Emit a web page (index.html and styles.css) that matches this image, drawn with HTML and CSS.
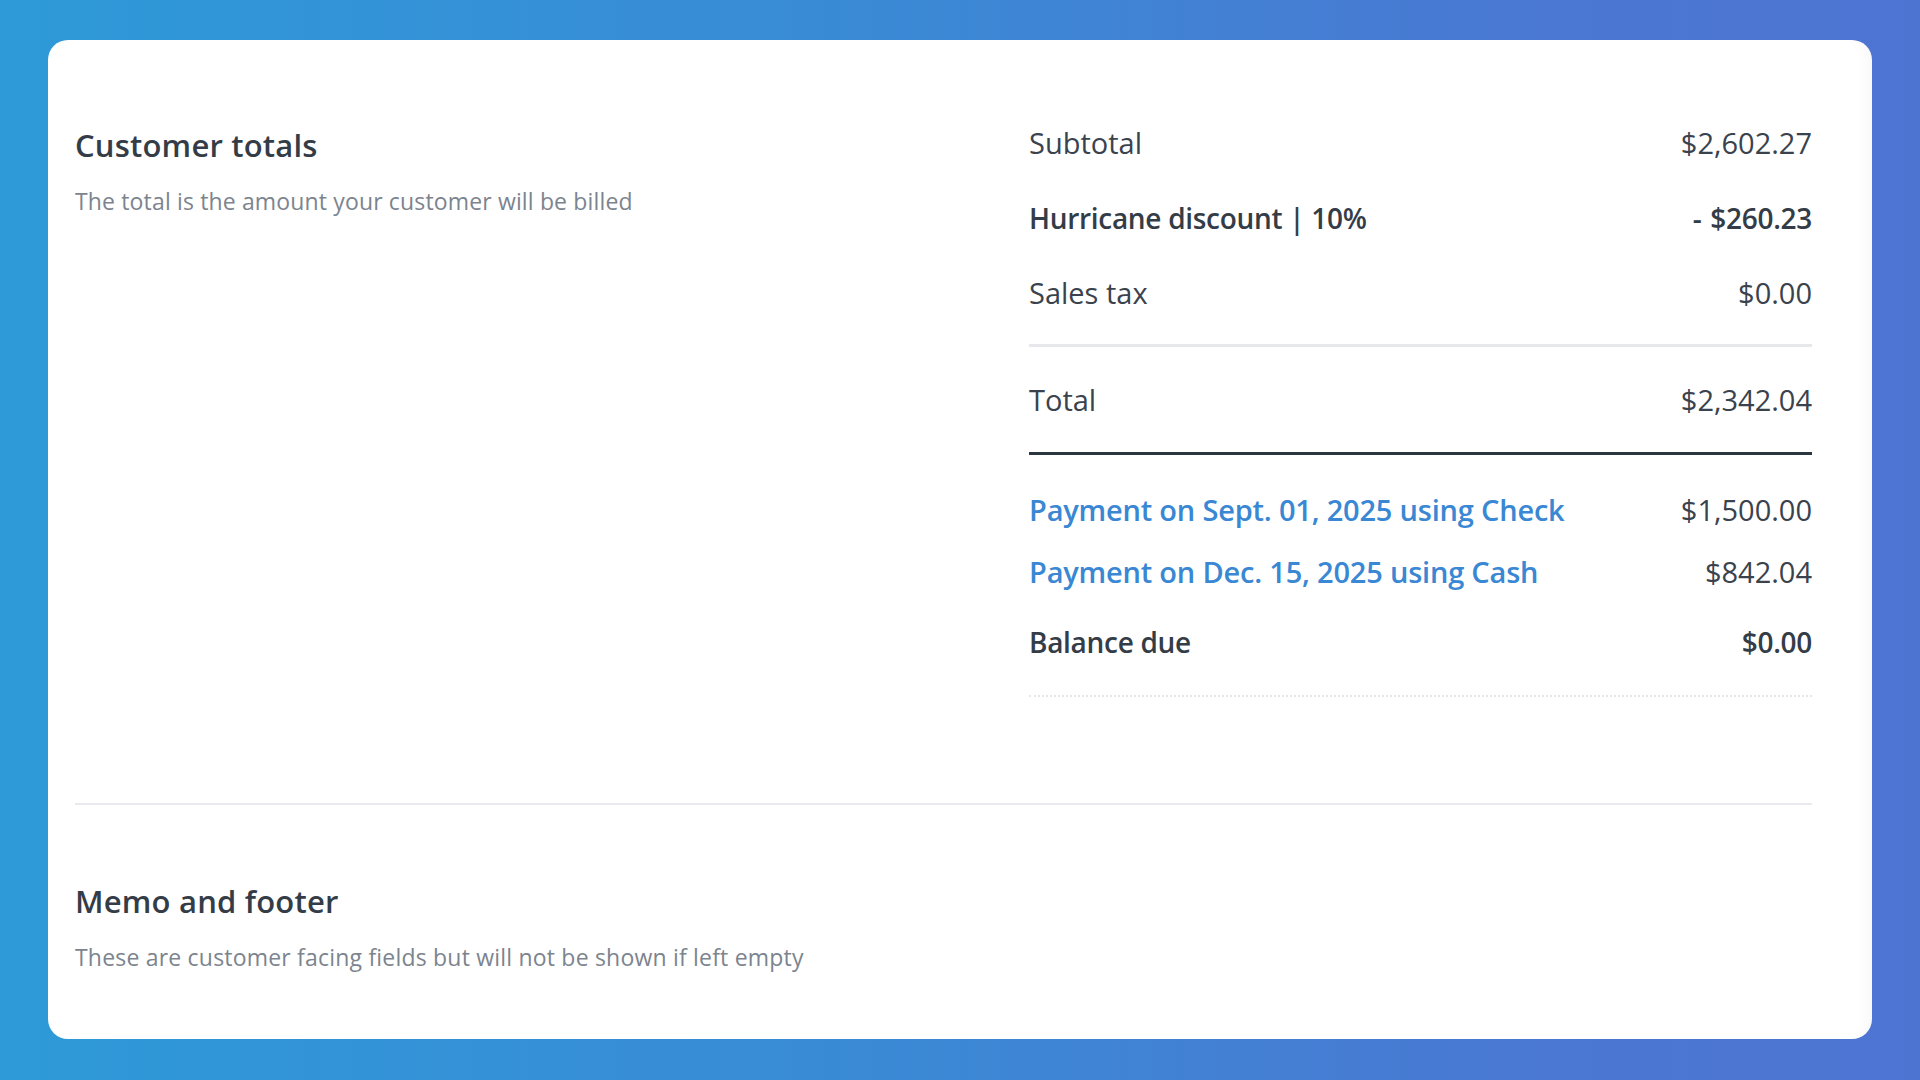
FILE: index.html
```html
<!DOCTYPE html>
<html lang="en">
<head>
<meta charset="utf-8">
<title>Customer totals</title>
<link rel="stylesheet" href="styles.css">
</head>
<body>
<div class="card">
  <section class="totals">
    <div class="intro">
      <h2 class="heading">Customer totals</h2>
      <p class="sub">The total is the amount your customer will be billed</p>
    </div>
    <div class="summary">
      <div class="row row-std"><span>Subtotal</span><span>$2,602.27</span></div>
      <div class="row row-std strong"><span>Hurricane discount | 10%</span><span>- $260.23</span></div>
      <div class="row row-std"><span>Sales tax</span><span>$0.00</span></div>
      <div class="rule-light"></div>
      <div class="row row-total"><span>Total</span><span>$2,342.04</span></div>
      <div class="rule-dark"></div>
      <div class="payments">
        <div class="row row-pay1"><a class="link">Payment on Sept. 01, 2025 using Check</a><span>$1,500.00</span></div>
        <div class="row row-pay2"><a class="link">Payment on Dec. 15, 2025 using Cash</a><span>$842.04</span></div>
        <div class="row row-balance strong"><span>Balance due</span><span>$0.00</span></div>
      </div>
      <div class="rule-dotted"></div>
    </div>
  </section>
  <div class="divider"></div>
  <section class="memo">
    <h2 class="heading">Memo and footer</h2>
    <p class="sub">These are customer facing fields but will not be shown if left empty</p>
  </section>
</div>
</body>
</html>
```
FILE: styles.css
```css
* { box-sizing: border-box; }
html, body { margin: 0; padding: 0; }
body {
  width: 1920px;
  height: 1080px;
  overflow: hidden;
  background: linear-gradient(90deg, #2e9ad8 0%, #3a8ad6 45%, #4a78d2 80%, #4e74d2 100%);
  padding: 40px 48px 41px 48px;
  font-family: "Open Sans", Lato, "Liberation Sans", sans-serif;
  color: #39424c;
}
.card {
  height: 999px;
  background: #fff;
  border-radius: 20px;
  padding: 65px 60px 0 27px;
  box-shadow: inset -16px 0 14px -12px rgba(0, 0, 0, 0.035);
}
.totals {
  display: grid;
  grid-template-columns: 1fr 783px;
}
.heading {
  margin: 0;
  font-size: 31px;
  font-weight: 600;
  color: #343d47;
  line-height: 36px;
  letter-spacing: 0.2px;
}
.sub {
  margin: 0;
  font-size: 23px;
  line-height: 28px;
  color: #7c848e;
  letter-spacing: 0.15px;
}
.intro .heading { margin-top: 22px; }
.intro .sub { margin-top: 24px; }
.row {
  display: flex;
  justify-content: space-between;
  align-items: center;
  font-size: 29px;
  color: #3a434d;
}
.row-std { height: 75px; }
.strong {
  font-weight: 600;
  font-size: 28px;
  letter-spacing: -0.3px;
  color: #343d47;
}
.strong span:last-child { word-spacing: 2px; }
.rule-light {
  margin-top: 14px;
  height: 3px;
  background: #e6e8eb;
}
.row-total { height: 105px; }
.rule-dark {
  height: 3px;
  background: #2c3640;
}
.payments { padding-top: 22px; }
.row-pay1 { height: 64px; }
.row-pay2 { height: 60px; }
.row-balance { height: 82px; }
.link {
  color: #3a87d3;
  font-weight: 600;
  letter-spacing: -0.2px;
  text-decoration: none;
}
.rule-dotted {
  margin-top: 12px;
  border-top: 2px dotted #e3e6ea;
}
.divider {
  margin-top: 106px;
  height: 2px;
  background: #e8eaed;
}
.memo { padding-top: 78px; }
.memo .sub { margin-top: 24px; letter-spacing: 0.2px; }
```
